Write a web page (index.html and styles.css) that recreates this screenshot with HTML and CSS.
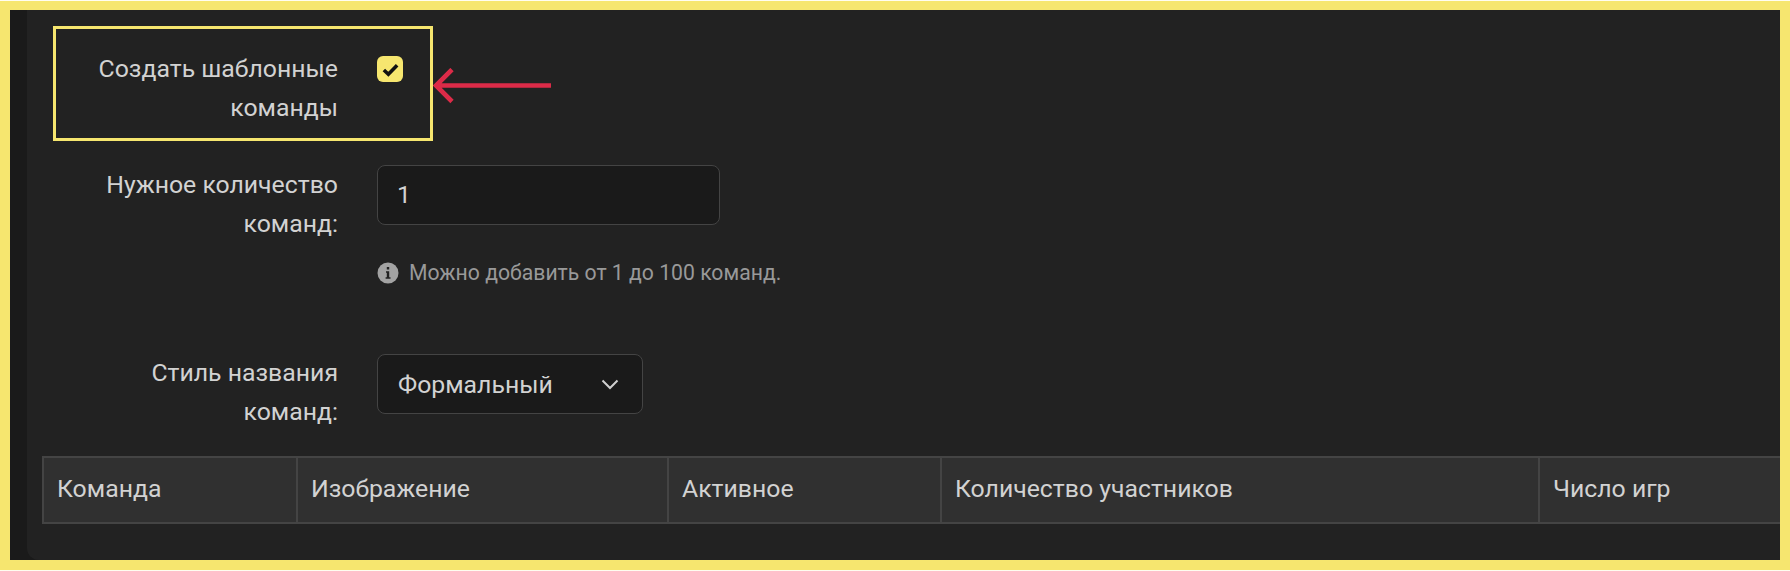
FILE: index.html
```html
<!DOCTYPE html>
<html lang="ru">
<head>
<meta charset="utf-8">
<title>Шаблонные команды</title>
<link rel="stylesheet" href="styles.css">
</head>
<body>
<main class="frame">
  <div class="rail"></div>
  <div class="content">
    <div class="highlight">
      <div class="row row-check">
        <div class="label">Создать шаблонные команды</div>
        <span class="checkbox">
          <svg viewBox="0 0 16 16" width="19" height="19" aria-hidden="true"><path d="M2.4 8.4 6.2 12 13.6 4.4" fill="none" stroke="#111" stroke-width="3"/></svg>
        </span>
      </div>
    </div>
    <svg class="arrow" viewBox="0 0 118 36" width="118" height="36" aria-hidden="true"><path d="M118 17.5H3M19 1.5 3 17.5 19 33.5" fill="none" stroke="#dc2b48" stroke-width="4.6"/></svg>

    <div class="row row-count">
      <div class="label">Нужное количество команд:</div>
      <div class="field">
        <div class="input input-number">1</div>
        <div class="hint">
          <svg viewBox="0 0 22 22" width="22" height="22" aria-hidden="true"><circle cx="11" cy="11" r="10.5" fill="#a3a3a3"/><path d="M9 9.2h3.2v6h1.3v1.6H8.6v-1.6h1.2v-4.4H9zM9.8 5h2.4v2.4H9.8z" fill="#222"/></svg>
          <span>Можно добавить от 1 до 100 команд.</span>
        </div>
      </div>
    </div>

    <div class="row row-style">
      <div class="label">Стиль названия команд:</div>
      <div class="input select">
        <span>Формальный</span>
        <svg viewBox="0 0 18 11" width="18" height="11" aria-hidden="true"><path d="M1.5 1.5 9 9l7.5-7.5" fill="none" stroke="#d0d0d0" stroke-width="2"/></svg>
      </div>
    </div>

    <div class="table">
      <div class="cell c1">Команда</div>
      <div class="cell c2">Изображение</div>
      <div class="cell c3">Активное</div>
      <div class="cell c4">Количество участников</div>
      <div class="cell c5">Число игр</div>
    </div>
  </div>
</main>
</body>
</html>
```

FILE: styles.css
```css
* { box-sizing: border-box; }
html, body { margin: 0; padding: 0; }
body {
  width: 1790px;
  height: 571px;
  background: #fffdf0;
  overflow: hidden;
  padding-top: 1px;
  font-family: Roboto, "Noto Sans", sans-serif;
  color: #d2d2d2;
}
.frame {
  display: flex;
  width: 1790px;
  height: 569px;
  background: #1a1a1a;
  border-style: solid;
  border-color: #f6e66f;
  border-width: 9px 10px 10px 10px;
  overflow: hidden;
}
.rail {
  width: 17px;
  flex: none;
}
.content {
  position: relative;
  flex: 1;
  min-width: 0;
  padding: 16px 0 0 16px;
  overflow: hidden;
  background: #222222;
  border-bottom-left-radius: 12px;
}
.highlight {
  width: 380px;
  height: 115px;
  margin-left: 10px;
  border: 3px solid #f6e66f;
  padding-top: 20px;
}
.row {
  display: flex;
  align-items: flex-start;
}
.label {
  font-size: 24.8px;
  line-height: 39px;
  text-align: right;
  flex: none;
}
.row-check .label {
  width: 282px;
}
.checkbox {
  display: flex;
  align-items: center;
  justify-content: center;
  flex: none;
  width: 26px;
  height: 26px;
  margin: 7px 0 0 39px;
  border-radius: 6px;
  background: #f6e66f;
}
.arrow {
  position: absolute;
  left: 406px;
  top: 58px;
}
.row-count {
  margin-top: 24px;
}
.row-count .label,
.row-style .label {
  width: 295px;
  padding-left: 40px;
}
.field, .select { margin-left: 39px; }
.input {
  background: #1a1a1a;
  border: 1px solid #444;
  border-radius: 8px;
  font-size: 24.8px;
  color: #d2d2d2;
}
.input-number {
  width: 343px;
  height: 60px;
  line-height: 58px;
  padding-left: 19px;
}
.hint {
  display: flex;
  align-items: center;
  gap: 10px;
  margin-top: 37px;
  font-size: 21.2px;
  line-height: 22px;
  color: #999;
  white-space: nowrap;
}
.row-style { margin-top: 69px; }
.select {
  display: flex;
  align-items: center;
  justify-content: space-between;
  width: 266px;
  height: 60px;
  margin-top: 1px;
  padding: 0 23px 0 20px;
}
.table {
  display: flex;
  width: 1800px;
  height: 68px;
  margin-top: 25px;
  margin-left: -1px;
  background: #303030;
  border: 1px solid #444;
  border-width: 2px 0 2px 2px;
}
.cell {
  flex: none;
  height: 100%;
  padding-left: 13px;
  font-size: 24.8px;
  line-height: 62px;
  border-right: 2px solid #444;
  white-space: nowrap;
}
.c1 { width: 254px; }
.c2 { width: 371px; }
.c3 { width: 273px; }
.c4 { width: 598px; }
.c5 { flex: 1; border-right: 0; }
```
